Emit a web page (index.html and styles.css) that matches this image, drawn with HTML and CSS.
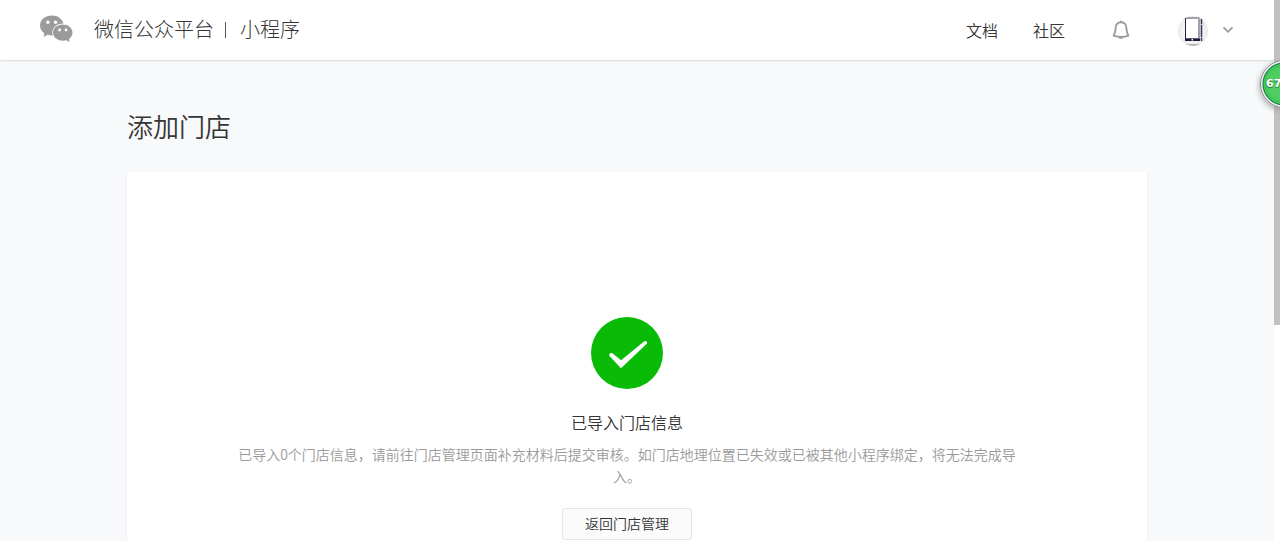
FILE: index.html
```html
<!DOCTYPE html>
<html lang="zh-CN">
<head>
<meta charset="utf-8">
<meta name="viewport" content="width=device-width, initial-scale=1">
<title>添加门店</title>
<link rel="stylesheet" href="styles.css">
</head>
<body class="window">
<div class="page">
  <header class="header">
    <a class="brand" href="#">
      <svg class="brand-logo" width="34" height="28" viewBox="0 0 34 28" aria-hidden="true">
        <path fill="#9b9b9b" d="M12 0.500C5.200 0.500 0 4.800 0 10.500c0 3.200 1.700 6 4.400 7.900L3.500 22l4.200-2.200c1.400.4 2.900.6 4.500.6h.6a9 9 0 0 1-.5-3c0-5 4.600-9 10.800-9h.4C22.300 3.900 17.800.5 12 .5z"/>
        <path fill="#9b9b9b" d="M32.500 17.600c0-4.600-4.400-8.100-9.700-8.100-5.500 0-9.800 3.600-9.800 8.100 0 4.700 4.300 8.200 9.800 8.200 1.200 0 2.300-.2 3.400-.5l3.600 2-.9-3.100c2.200-1.600 3.600-3.900 3.600-6.600z"/>
        <g fill="#fff"><circle cx="7.800" cy="7.300" r="1.700"/><circle cx="15.500" cy="7.300" r="1.700"/><circle cx="19.600" cy="15" r="1.400"/><circle cx="26" cy="15" r="1.400"/></g>
      </svg>
      <span class="brand-name">微信公众平台</span>
      <span class="brand-divider"></span>
      <span class="brand-name">小程序</span>
    </a>
    <nav class="nav">
      <a class="nav-link" href="#">文档</a>
      <a class="nav-link" href="#">社区</a>
      <button class="icon-button bell" type="button" aria-label="通知">
        <svg width="18" height="20" viewBox="0 0 18 20" fill="none" stroke="#9a9a9a" stroke-width="1.900" stroke-linejoin="round">
          <path d="M9 2.300c-3.500 0-5.400 2.300-5.400 5.600 0 3.200-.6 5.400-2 7.800 2.200.8 4.600 1.300 7.400 1.300s5.200-.5 7.400-1.300c-1.400-2.400-2-4.600-2-7.800 0-3.300-1.900-5.600-5.400-5.600z"/>
          <path d="M8 1.700h2M7.300 17.800h3.400"/>
        </svg>
      </button>
      <button class="icon-button account" type="button" aria-label="账号">
        <svg width="30" height="32" viewBox="0 0 30 32">
          <defs>
            <radialGradient id="disc"><stop offset="0.500" stop-color="#fafafa"/><stop offset="1" stop-color="#e9e9e9"/></radialGradient>
            <clipPath id="round"><circle cx="15" cy="17" r="15"/></clipPath>
          </defs>
          <g clip-path="url(#round)">
            <rect y="2" width="30" height="30" fill="url(#disc)"/>
            <rect y="30" width="30" height="2" fill="#b4b4b4"/>
            <rect x="22" y="4" width="3" height="23" rx="1" fill="#c9c7d0"/>
            <path d="M23.500 5v22" stroke="#3b3850" stroke-width="1.200" stroke-dasharray="5 1 12 1"/>
            <rect x="7" y="3" width="15" height="24" rx="1" fill="#a3a1ab"/>
            <path d="M7.500 4v22" stroke="#25223b"/>
            <rect x="8" y="5" width="12" height="19" fill="#fff"/>
            <rect x="7" y="24.500" width="15" height="2.500" fill="#1d1a38"/>
            <rect x="13.500" y="25" width="1.500" height="1.500" fill="#fff"/>
          </g>
        </svg>
        <svg width="12" height="8" viewBox="0 0 12 8" fill="none" stroke="#9a9a9a" stroke-width="1.800"><path d="M1.500 1.300L6 5.800l4.500-4.500"/></svg>
      </button>
    </nav>
  </header>
  <main class="main">
    <h1 class="page-title">添加门店</h1>
    <section class="card">
      <svg class="result-icon" width="72" height="72" viewBox="0 0 72 72" aria-hidden="true">
        <circle cx="36" cy="36" r="36" fill="#09bb07"/>
        <path fill="#fff" d="M18.400 37.200c.5-1.300 2-1.700 3-.9l8.700 6.900L53 24.400c.9-.7 1.900-.7 2.600 0 .7.8.6 1.800-.1 2.500L30 51.200 18.700 39.300c-.5-.6-.6-1.400-.3-2.100z"/>
      </svg>
      <h2 class="result-title">已导入门店信息</h2>
      <p class="result-text">已导入0个门店信息，请前往门店管理页面补充材料后提交审核。如门店地理位置已失效或已被其他小程序绑定，将无法完成导入。</p>
      <button class="button" type="button">返回门店管理</button>
    </section>
  </main>
</div>
<div class="scrollbar"><div class="scrollbar-thumb"></div></div>
<div class="speed-ball">67</div>
</body>
</html>
```
FILE: styles.css
```css
* {
  box-sizing: border-box;
}

.window {
  display: flex;
  height: 100vh;
  margin: 0;
  overflow: hidden;
  position: relative;
  background: #f8f9fb;
  color: #353535;
  font-family: "Noto Sans CJK SC", sans-serif;
  font-size: 14px;
  font-weight: 350;
}

.page {
  flex: 1;
  min-width: 0;
}

.header {
  display: flex;
  align-items: center;
  justify-content: space-between;
  height: 60px;
  padding: 0 40px;
  background: #fff;
  box-shadow: 0 1px 2px #d5d8dc;
}

.brand {
  display: flex;
  align-items: center;
  padding-bottom: 3px;
  color: inherit;
  font-weight: 300;
  text-decoration: none;
}

.brand-logo {
  margin-right: 20px;
}

.brand-name {
  font-size: 20px;
  line-height: 28px;
}

.brand-divider {
  width: 1px;
  height: 16px;
  margin: 2px 14px 0 11px;
  background: #555;
}

.nav {
  display: flex;
  align-items: center;
}

.nav-link {
  margin-right: 35px;
  color: inherit;
  font-size: 16px;
  line-height: 24px;
  text-decoration: none;
}

.icon-button {
  display: flex;
  align-items: center;
  padding: 0;
  border: 0;
  background: none;
}

.bell {
  margin: 0 48px 0 12px;
}

.account {
  gap: 14px;
}

.main {
  max-width: 1020px;
  margin: 0 auto;
  padding-top: 46px;
}

.page-title {
  margin: 0 0 26px;
  font-size: 26px;
  font-weight: 350;
  line-height: 40px;
}

.card {
  display: flex;
  flex-direction: column;
  align-items: center;
  padding: 145px 130px 80px 110px;
  border-radius: 4px;
  background: #fff;
  box-shadow: 0 1px 2px #dcdfe3;
}

.result-title {
  margin: 20px 0 8px;
  font-size: 16px;
  font-weight: 350;
  line-height: 26px;
}

.result-text {
  margin: 0 0 21px;
  color: #9a9a9a;
  line-height: 22px;
  text-align: center;
}

.button {
  min-width: 130px;
  height: 32px;
  padding: 0 20px 2px;
  border: 1px solid #e4e6ea;
  border-radius: 3px;
  background: #fbfbfb;
  color: #353535;
  font: inherit;
}

.scrollbar {
  width: 6px;
  background: #fff;
}

.scrollbar-thumb {
  height: 60%;
  background: #c1c1c1;
}

.speed-ball {
  position: absolute;
  top: 60px;
  right: -28px;
  width: 48px;
  height: 48px;
  padding-left: 5px;
  border: 1px solid #8e8e8e;
  border-radius: 50%;
  background: radial-gradient(circle at 50% 50%, #4fcf63 0 15px, #3fc455 20px, #16784a 21px, #f2f2f2 22px, #e6e6e6 24px);
  box-shadow: 0 2px 6px #999;
  color: #fff;
  font: bold 11px/46px "DejaVu Sans", sans-serif;
  text-shadow: 0 1px 1px #1c6b35;
}
```
